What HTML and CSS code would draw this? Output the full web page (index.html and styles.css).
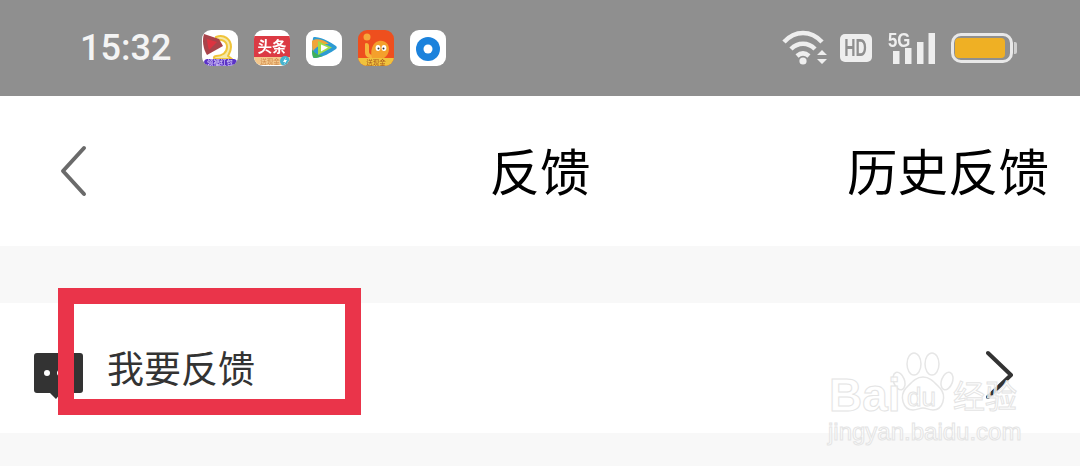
FILE: index.html
```html
<!DOCTYPE html>
<html lang="zh-CN">
<head>
  <meta charset="UTF-8">
  <meta name="viewport" content="width=device-width, initial-scale=1.0">
  <title>反馈</title>
  <link rel="stylesheet" href="styles.css">
</head>
<body>
  <div class="page">
    <div class="statusBar">
      <span class="time">15:32</span>
      <div class="apps">
        <div class="app">
          <svg width="36" height="36" viewBox="0 0 36 36">
            <path d="M14 7c8-3 15 2 15 10 0 4-2 7-3 9l4 3H13c-2-1-1-3 1-3 6 0 11-3 11-9s-5-8-11-7z" fill="#f5e9a8" stroke="#f0c43a" stroke-width="2" stroke-linejoin="round"/>
            <path d="M2 4l15 5 4 7-16 9C1 19 0 10 2 4z" fill="#a9434a"/>
            <path d="M5 9l10 3-8 8c-1-3-2-8-2-11z" fill="#dd3340"/>
            <rect x="2" y="29" width="33" height="7" rx="3.500" fill="#5b33c6"/>
            <text x="18" y="35" class="tinyText" fill="#e8e0ff">领福红包</text>
          </svg>
        </div>
        <div class="app">
          <svg width="36" height="36" viewBox="0 0 36 36">
            <rect y="6" width="36" height="21" fill="#dc3a44"/>
            <path d="M0 27h36v1c0 4-3 7-7 7H7c-4 0-7-3-7-7z" fill="#f3c78c"/>
            <text x="18" y="22" class="newsText" fill="#fff">头条</text>
            <text x="16" y="33.500" class="tinyText" fill="#d08a4a">送现金</text>
            <circle cx="31" cy="31" r="5" fill="#45b3cf"/>
            <path d="M32 27l-3 5h2l-1 3 3-5h-2z" fill="#fff"/>
          </svg>
        </div>
        <div class="app">
          <svg width="36" height="36" viewBox="0 0 36 36">
            <path d="M7 8c0-1 1-1 2-1 9 1 15 5 21 9 1 1 1 2 0 3-6 4-12 8-21 9-1 0-2 0-2-1-1-6-1-13 0-19z" fill="#2d9bd4"/>
            <path d="M6 19c0 3 0 6 1 8 1 1 2 1 3 1l7-2c-5-1-9-3-11-7z" fill="#3fb05a"/>
            <path d="M6 11c3-3 12-2 17 3-7 0-12 2-16 7-1-3-1-7-1-10z" fill="#f0a53a"/>
            <path d="M12 11l14 6.500-14 7.500z" fill="#9fdc4a"/>
            <path d="M15 14.500l7 3-7 4z" fill="#fff"/>
          </svg>
        </div>
        <div class="app appMonkey">
          <svg width="36" height="36" viewBox="0 0 36 36">
            <rect y="28" width="36" height="8" fill="#f0c23c"/>
            <circle cx="9" cy="7" r="3.500" fill="#f6a63a"/>
            <path d="M8 13c2 0 3 1 3 3v6c0 2 2 3 4 3l-1 3c-5 0-7-2-7-6v-7c0-1 0-2 1-2z" fill="#f6b43c"/>
            <path d="M14 28c-2-6 0-16 7-17 6-1 10 3 10 8 0 4-2 7-5 9z" fill="#f4a02c"/>
            <ellipse cx="20" cy="18" rx="2.400" ry="3" fill="#fff"/>
            <ellipse cx="26" cy="18" rx="2.400" ry="3" fill="#fff"/>
            <circle cx="20.500" cy="18.500" r="1" fill="#333"/>
            <circle cx="25.500" cy="18.500" r="1" fill="#333"/>
            <text x="18" y="34.500" class="tinyText" fill="#a8581e">送现金</text>
          </svg>
        </div>
        <div class="app">
          <svg width="36" height="36" viewBox="0 0 36 36">
            <circle cx="18" cy="19" r="12" fill="#1b82dc"/>
            <circle cx="18" cy="19" r="4.500" fill="#fff"/>
          </svg>
        </div>
      </div>
      <div class="indicators">
        <svg class="wifi" width="46" height="38" viewBox="0 0 46 38" fill="none" stroke="#eeeeee" stroke-width="4.500">
          <path d="M3 12c11-12 27-12 38 0"/>
          <path d="M10 19c7-7 17-7 24 0"/>
          <path d="M16 26c4-3.500 8-3.500 12 0"/>
          <circle cx="22" cy="31" r="3.600" fill="#eeeeee" stroke="none"/>
          <path d="M36 25l5-5 5 5zM36 29l5 5 5-5z" fill="#eeeeee" stroke="none"/>
        </svg>
        <div class="hd"><span class="hdText">HD</span></div>
        <div class="signal">
          <span class="fiveG">5G</span>
          <svg width="42" height="31" viewBox="0 0 42 31" fill="#eeeeee">
            <rect x="0" y="18" width="6.500" height="13"/>
            <rect x="12" y="15" width="6.500" height="16"/>
            <rect x="24" y="9" width="6.500" height="22"/>
            <rect x="35.500" y="0" width="6.500" height="31"/>
          </svg>
        </div>
        <div class="battery">
          <div class="batteryBody"><div class="batteryFill"></div></div>
          <div class="batteryTip"></div>
        </div>
      </div>
    </div>

    <div class="navBar">
      <svg class="backIcon" width="28" height="52" viewBox="0 0 28 52" fill="none" stroke="#6a6a6a" stroke-width="4" stroke-linecap="round" stroke-linejoin="round">
        <path d="M24 3L3 26l21 23"/>
      </svg>
      <h1 class="navTitle">反馈</h1>
      <span class="navHistory">历史反馈</span>
    </div>

    <div class="feedRow">
      <svg class="chatIcon" width="49" height="46" viewBox="0 0 49 46">
        <path d="M3 0h43c2 0 3 1 3 3v34c0 2-1 3-3 3H27l-5 6-6-6H3c-2 0-3-1-3-3V3C0 1 1 0 3 0z" fill="#333"/>
        <circle cx="13" cy="20" r="3" fill="#fff"/>
        <circle cx="26" cy="20" r="3" fill="#fff"/>
      </svg>
      <span class="feedText">我要反馈</span>
      <svg class="nextIcon" width="28" height="50" viewBox="0 0 28 50" fill="none" stroke="#333" stroke-width="4" stroke-linecap="round" stroke-linejoin="round">
        <path d="M2 3l23 22L2 47"/>
      </svg>
    </div>

    <div class="redBox"></div>

    <div class="watermark">
      <svg class="paw" width="62" height="60" viewBox="0 0 62 60" fill="none" stroke="#e6e6e6" stroke-width="1.500">
        <ellipse cx="22" cy="12" rx="7" ry="11"/>
        <ellipse cx="40" cy="12" rx="7" ry="11"/>
        <ellipse cx="7" cy="29" rx="5.500" ry="9" transform="rotate(-20 7 29)"/>
        <ellipse cx="55" cy="29" rx="5.500" ry="9" transform="rotate(20 55 29)"/>
        <path d="M31 25c7 0 11 5 17 11 7 8 3 22-7 22-5 0-6-2-10-2s-5 2-10 2c-10 0-14-14-7-22 6-6 10-11 17-11z" fill="#fff"/>
      </svg>
      <span class="wmBai">Bai</span>
      <span class="wmDu">du</span>
      <span class="wmCn">经验</span>
      <span class="wmUrl">jingyan.baidu.com</span>
    </div>
  </div>
</body>
</html>
```

FILE: styles.css
```css
html, body {
  margin: 0;
  padding: 0;
}
body {
  width: 1080px;
  height: 466px;
  overflow: hidden;
  background: #f8f8f8;
  font-family: "Noto Sans CJK SC", "Liberation Sans", sans-serif;
}
.page {
  position: relative;
  height: 466px;
}

.statusBar {
  height: 96px;
  background: #8f8f8f;
  display: flex;
  align-items: center;
  padding: 0 63px 0 80px;
  box-sizing: border-box;
}
.time {
  width: 122px;
  font-family: Roboto, "Liberation Sans", sans-serif;
  font-size: 36px;
  font-weight: 500;
  color: #f4f4f4;
}
.apps {
  display: flex;
  gap: 16px;
  margin-top: -1px;
}
.app {
  width: 36px;
  height: 36px;
  border-radius: 9px;
  background: #fff;
  overflow: hidden;
  filter: blur(0.4px);
}
.appMonkey {
  background: #ee4f1e;
}
.tinyText {
  font-size: 6.5px;
  text-anchor: middle;
}
.newsText {
  font-size: 14.5px;
  font-weight: 700;
  text-anchor: middle;
}

.indicators {
  margin-left: auto;
  display: flex;
  align-items: center;
}
.wifi {
  margin-top: 2px;
}
.hd {
  width: 32px;
  height: 28px;
  margin-left: 13px;
  border-radius: 5px;
  background: #eeeeee;
  display: flex;
  justify-content: center;
  align-items: center;
}
.hdText {
  display: inline-block;
  color: #8f8f8f;
  font-family: "Liberation Sans", sans-serif;
  font-size: 23px;
  font-weight: 700;
  line-height: 28px;
  transform: scaleX(0.68);
}
.signal {
  position: relative;
  margin-left: 16px;
  width: 47px;
  height: 31px;
  display: flex;
  justify-content: flex-end;
}
.fiveG {
  position: absolute;
  left: 0;
  top: -3px;
  font-family: "Liberation Sans", sans-serif;
  font-size: 21px;
  font-weight: 700;
  line-height: 20px;
  color: #eeeeee;
  transform: scaleX(0.8);
  transform-origin: left;
}
.signal svg {
  display: block;
}
.battery {
  display: flex;
  align-items: center;
  margin-left: 16px;
}
.batteryBody {
  width: 62px;
  height: 30px;
  border: 3px solid #e8e8e8;
  border-radius: 10px;
  padding: 2px 5px 2px 1px;
  box-sizing: border-box;
}
.batteryFill {
  height: 100%;
  background: #efb024;
  border-radius: 4px;
}
.batteryTip {
  width: 3px;
  height: 12px;
  margin-left: 1px;
  background: #d0d0d0;
  border-radius: 0 2px 2px 0;
}

.navBar {
  position: relative;
  height: 150px;
  background: #fff;
  display: flex;
  align-items: center;
  padding: 0 31px 0 60px;
  box-sizing: border-box;
}
.navTitle {
  position: absolute;
  left: 0;
  right: 0;
  margin: -5px 0 0;
  text-align: center;
  font-size: 50.5px;
  font-weight: 400;
  color: #000;
}
.navHistory {
  margin-left: auto;
  margin-top: -5px;
  font-size: 50.5px;
  color: #000;
}

.feedRow {
  height: 130px;
  margin-top: 57px;
  background: #fff;
  display: flex;
  align-items: center;
  padding: 0 66px 0 34px;
  box-sizing: border-box;
}
.chatIcon {
  margin-top: 16px;
}
.feedText {
  margin-left: 24px;
  margin-top: -2px;
  font-size: 37px;
  color: #333;
}
.nextIcon {
  margin-left: auto;
  margin-top: 14px;
}

.redBox {
  position: absolute;
  left: 58px;
  top: 288px;
  width: 271px;
  height: 95px;
  border: 16px solid #ea344a;
}

.watermark {
  position: absolute;
  left: 828px;
  top: 352px;
  width: 200px;
  height: 100px;
  color: rgba(255, 255, 255, 0.75);
  -webkit-text-stroke: 1px #e4e4e4;
  font-family: "Liberation Sans", sans-serif;
}
.paw {
  position: absolute;
  left: 64px;
  top: 0;
}
.wmBai {
  position: absolute;
  left: 1px;
  top: 17px;
  font-size: 46px;
  font-weight: 700;
  line-height: 52px;
}
.wmDu {
  position: absolute;
  left: 79px;
  top: 30px;
  font-size: 26px;
  line-height: 30px;
}
.wmCn {
  position: absolute;
  left: 125px;
  top: 20px;
  font-family: "Noto Sans CJK SC", sans-serif;
  font-size: 32px;
  line-height: 44px;
  white-space: nowrap;
}
.wmUrl {
  position: absolute;
  left: 0;
  top: 66px;
  font-size: 24px;
  line-height: 28px;
  white-space: nowrap;
}
```
